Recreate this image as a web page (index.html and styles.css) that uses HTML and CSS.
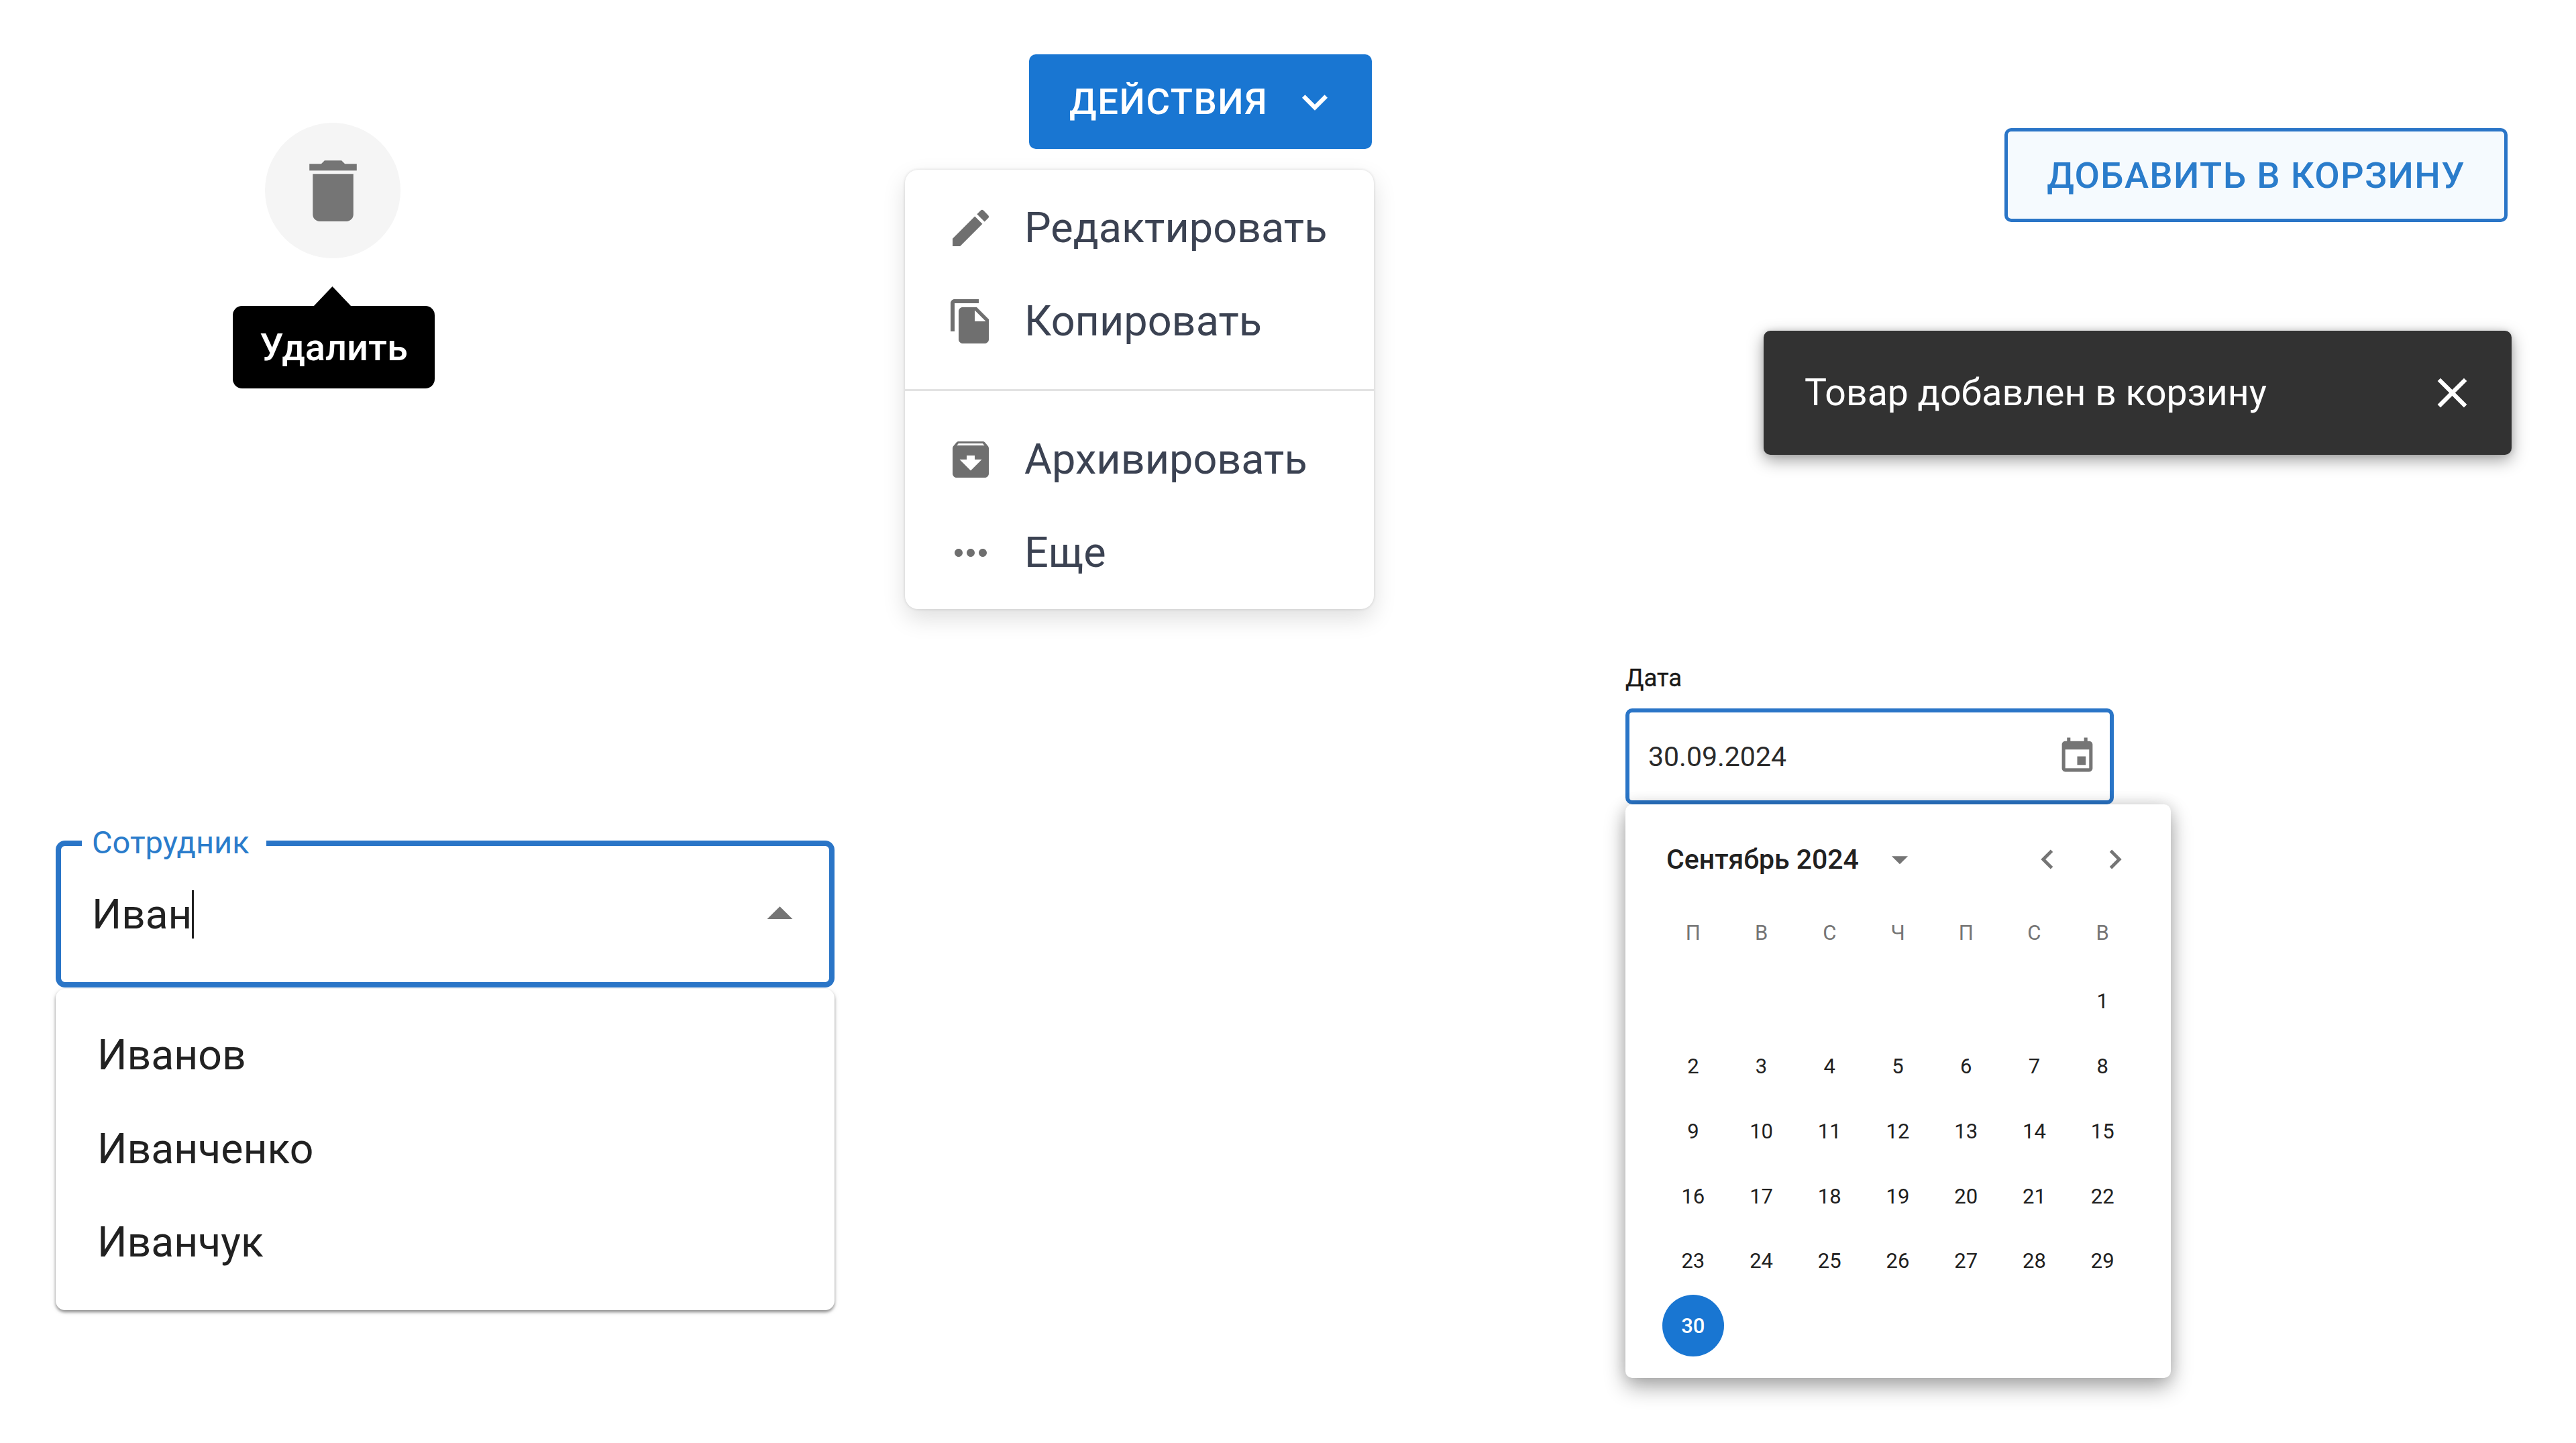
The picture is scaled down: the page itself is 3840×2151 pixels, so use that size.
FILE: index.html
```html
<!DOCTYPE html>
<html lang="ru">
<head>
<meta charset="utf-8">
<title>UI</title>
<link rel="stylesheet" href="styles.css">
</head>
<body>
<main class="page">
  <section class="col col-left">
    <div class="tip-group">
      <div class="round-btn">
        <svg class="i-trash" viewBox="0 0 24 24"><path d="M6 19c0 1.1.9 2 2 2h8c1.1 0 2-.9 2-2V7H6v12zM19 4h-3.5l-1-1h-5l-1 1H5v2h14V4z"/></svg>
      </div>
      <div class="tooltip">Удалить</div>
    </div>
    <div class="auto">
      <span class="auto-label">Сотрудник</span>
      <div class="auto-value"><span>Иван</span><span class="caret"></span></div>
      <svg class="i-drop" viewBox="0 0 24 24"><path d="M7 14l5-5 5 5z"/></svg>
    </div>
    <ul class="auto-list">
      <li>Иванов</li>
      <li>Иванченко</li>
      <li>Иванчук</li>
    </ul>
  </section>

  <section class="col col-mid">
    <button class="btn-actions">
      <span>Действия</span>
      <svg class="i-more" viewBox="0 0 24 24"><path d="M7.41 8.59 12 13.17l4.59-4.58L18 10l-6 6-6-6z"/></svg>
    </button>
    <div class="menu">
      <div class="menu-item">
        <svg class="i-menu" viewBox="0 0 24 24"><path d="M3 17.25V21h3.75L17.81 9.94l-3.75-3.75L3 17.25zM20.71 7.04c.39-.39.39-1.02 0-1.41l-2.34-2.34a.996.996 0 0 0-1.41 0l-1.83 1.83 3.75 3.75 1.83-1.83z"/></svg>
        <span>Редактировать</span>
      </div>
      <div class="menu-item">
        <svg class="i-menu" viewBox="0 0 24 24"><path d="M16 1H4c-1.1 0-2 .9-2 2v14h2V3h12V1zm-1 4 6 6v10c0 1.1-.9 2-2 2H7.99C6.89 23 6 22.1 6 21l.01-14c0-1.1.89-2 1.99-2h7zm-1 7h5.5L14 6.5V12z"/></svg>
        <span>Копировать</span>
      </div>
      <hr class="menu-div">
      <div class="menu-item">
        <svg class="i-menu" viewBox="0 0 24 24"><path d="M20.54 5.23l-1.39-1.68C18.88 3.21 18.47 3 18 3H6c-.47 0-.88.21-1.16.55L3.46 5.23C3.17 5.57 3 6.02 3 6.5V19c0 1.1.9 2 2 2h14c1.1 0 2-.9 2-2V6.5c0-.48-.17-.93-.46-1.27zM12 17.5 6.5 12H10v-2h4v2h3.5L12 17.5zM5.12 5l.81-1h12l.94 1H5.12z"/></svg>
        <span>Архивировать</span>
      </div>
      <div class="menu-item">
        <svg class="i-menu" viewBox="0 0 24 24"><path d="M6 10c-1.1 0-2 .9-2 2s.9 2 2 2 2-.9 2-2-.9-2-2-2zm12 0c-1.1 0-2 .9-2 2s.9 2 2 2 2-.9 2-2-.9-2-2-2zm-6 0c-1.1 0-2 .9-2 2s.9 2 2 2 2-.9 2-2-.9-2-2-2z"/></svg>
        <span>Еще</span>
      </div>
    </div>
  </section>

  <section class="col col-right">
    <button class="btn-cart">Добавить в корзину</button>
    <div class="snack">
      <span>Товар добавлен в корзину</span>
      <svg class="i-close" viewBox="0 0 24 24"><path d="M19 6.41 17.59 5 12 10.59 6.41 5 5 6.41 10.59 12 5 17.59 6.41 19 12 13.41 17.59 19 19 17.59 13.41 12z"/></svg>
    </div>
    <div class="date-label">Дата</div>
    <div class="date-field">
      <span>30.09.2024</span>
      <svg class="i-event" viewBox="0 0 24 24"><path d="M17 12h-5v5h5v-5zM16 1v2H8V1H6v2H5c-1.11 0-1.99.9-1.99 2L3 19c0 1.1.89 2 2 2h14c1.1 0 2-.9 2-2V5c0-1.1-.9-2-2-2h-1V1h-2zm3 18H5V8h14v11z"/></svg>
    </div>
    <div class="cal">
      <div class="cal-head">
        <span class="cal-title">Сентябрь 2024</span>
        <svg class="i-cal" viewBox="0 0 24 24"><path d="m7 10 5 5 5-5z"/></svg>
        <div class="cal-nav">
          <svg class="i-cal" viewBox="0 0 24 24"><path d="M15.41 7.41 14 6l-6 6 6 6 1.41-1.41L10.83 12z"/></svg>
          <svg class="i-cal" viewBox="0 0 24 24"><path d="M10 6 8.59 7.41 13.17 12l-4.58 4.59L10 18l6-6z"/></svg>
        </div>
      </div>
      <div class="cal-week">
        <span>П</span><span>В</span><span>С</span><span>Ч</span><span>П</span><span>С</span><span>В</span>
      </div>
      <div class="cal-days">
        <span class="day first">1</span>
        <span class="day">2</span><span class="day">3</span><span class="day">4</span><span class="day">5</span><span class="day">6</span><span class="day">7</span><span class="day">8</span>
        <span class="day">9</span><span class="day">10</span><span class="day">11</span><span class="day">12</span><span class="day">13</span><span class="day">14</span><span class="day">15</span>
        <span class="day">16</span><span class="day">17</span><span class="day">18</span><span class="day">19</span><span class="day">20</span><span class="day">21</span><span class="day">22</span>
        <span class="day">23</span><span class="day">24</span><span class="day">25</span><span class="day">26</span><span class="day">27</span><span class="day">28</span><span class="day">29</span>
        <span class="day"><b class="sel">30</b></span>
      </div>
    </div>
  </section>
</main>
</body>
</html>
```
FILE: styles.css
```css
* { box-sizing: border-box; }
html, body { margin: 0; padding: 0; background: #fff; }
body { font-family: Roboto, "Noto Sans", sans-serif; overflow: hidden; }
svg { display: block; flex: none; }

.page { display: flex; align-items: flex-start; width: 3840px; height: 2151px; padding: 81px 0 0 83px; }
.col { display: flex; flex-direction: column; }
.col-left { width: 1161px; margin-right: 105px; }
.col-mid { width: 699px; margin-right: 375px; }
.col-right { width: 1321px; }

/* tooltip */
.tip-group { display: flex; flex-direction: column; align-items: center; gap: 71px; width: 301px; margin: 102px 0 0 264px; }
.round-btn { display: flex; align-items: center; justify-content: center; width: 202px; height: 202px; margin-right: 3px; border-radius: 50%; background: #f5f5f5; }
.i-trash { width: 121px; height: 121px; fill: #757575; }
.tooltip { position: relative; display: flex; align-items: center; justify-content: center; width: 301px; height: 123px; border-radius: 14px; background: #000; color: #fff; font-size: 56px; font-weight: 500; }
.tooltip::before { content: ""; position: absolute; left: 120px; top: -29px; width: 57px; height: 30px; background: #000; clip-path: polygon(50% 0, 100% 100%, 0 100%); }

/* autocomplete */
.auto { position: relative; display: flex; align-items: center; justify-content: space-between; height: 219px; margin-top: 674px; padding: 0 28px 0 46px; border: 8px solid #2a75c7; border-radius: 14px; }
.auto-label { position: absolute; left: 31px; top: -30px; padding: 0 25px 0 15px; background: #fff; color: #2a7ccb; font-size: 47px; line-height: 50px; }
.auto-value { display: flex; align-items: center; color: #212121; font-size: 62px; line-height: 72px; }
.caret { width: 3px; height: 72px; margin-left: 0; background: #212121; }
.i-drop { width: 91px; height: 91px; fill: #757575; }
.auto-list { margin: 2px 0 0; padding: 29px 0 31px; list-style: none; background: #fff; border-radius: 14px; box-shadow: 0 3px 4px rgba(0, 0, 0, .4), 0 2px 10px rgba(0, 0, 0, .1); }
.auto-list li { display: flex; align-items: center; height: 139.5px; padding-left: 62px; color: #212121; font-size: 62.5px; }

/* actions */
.btn-actions { display: flex; align-items: center; align-self: flex-end; justify-content: space-between; width: 511px; height: 141px; margin-right: 3px; padding: 0 47px 0 60px; border: 0; border-radius: 10px; background: #1976d2; color: #fff; font-family: inherit; font-size: 54.4px; font-weight: 500; letter-spacing: 1.55px; text-transform: uppercase; }
.i-more { width: 76px; height: 76px; fill: #fff; }
.menu { margin-top: 31px; padding: 17px 0 15px; background: #fff; border-radius: 20px; box-shadow: 0 14px 34px rgba(0, 0, 0, .13), 0 0 4px rgba(0, 0, 0, .14); }
.menu-item { display: flex; align-items: center; gap: 44px; height: 139px; padding-left: 62px; color: #3b4252; font-size: 63px; }
.i-menu { width: 72px; height: 72px; fill: #6f6f6f; }
.menu-div { height: 3px; margin: 32px 0; border: 0; background: #e2e2e2; }

/* cart */
.btn-cart { align-self: flex-end; width: 750px; height: 140px; margin: 110px 6px 0 0; padding: 0; border: 5px solid #2a75c7; border-radius: 10px; background: #f5fafe; color: #2a7ccb; font-family: inherit; font-size: 54.4px; font-weight: 500; letter-spacing: 1.35px; text-transform: uppercase; }

/* snackbar */
.snack { display: flex; align-items: center; justify-content: space-between; width: 1115px; height: 185px; margin: 162px 0 0 206px; padding: 0 51px 0 61px; border-radius: 10px; background: #323232; color: #fff; font-size: 55.4px; box-shadow: 0 8px 24px rgba(0, 0, 0, .38), 0 0 10px rgba(0, 0, 0, .12); }
.i-close { width: 75px; height: 75px; fill: #fff; }

/* date */
.date-label { margin-top: 314px; margin-bottom: -2px; color: #1a1a1a; font-size: 36.5px; line-height: 38px; -webkit-text-stroke: .3px #1a1a1a; }
.date-field { display: flex; align-items: center; justify-content: space-between; width: 728px; height: 143px; margin-top: 28px; padding: 0 18px 0 28px; border: 6px solid #2a75c7; border-radius: 10px; color: #2a2a2a; font-size: 41px; }
.i-event { width: 61px; height: 61px; fill: #757575; }
.cal { width: 813px; padding: 53px 51px 29px 50px; background: #fff; border-radius: 10px; box-shadow: 0 14px 32px rgba(0, 0, 0, .32), 0 0 22px rgba(0, 0, 0, .14); }
.cal-head { display: flex; align-items: center; height: 58px; padding: 0 3px 0 11px; }
.cal-title { color: #212121; font-size: 41px; font-weight: 500; }
.i-cal { width: 58px; height: 58px; fill: #757575; }
.cal-title + .i-cal { margin-left: 32px; }
.cal-nav { display: flex; gap: 43px; margin-left: auto; }
.cal-week { display: grid; grid-template-columns: repeat(7, 1fr); height: 90px; margin-top: 35px; color: #757575; font-size: 31px; }
.cal-week span { display: flex; align-items: center; justify-content: center; }
.cal-days { display: grid; grid-template-columns: repeat(7, 1fr); grid-auto-rows: 96.7px; margin-top: 9.6px; color: #212121; font-size: 31px; }
.day { display: flex; align-items: center; justify-content: center; }
.first { grid-column-start: 7; }
.sel { display: flex; align-items: center; justify-content: center; width: 92px; height: 92px; border-radius: 50%; background: #1976d2; color: #fff; font-weight: 500; }
```
